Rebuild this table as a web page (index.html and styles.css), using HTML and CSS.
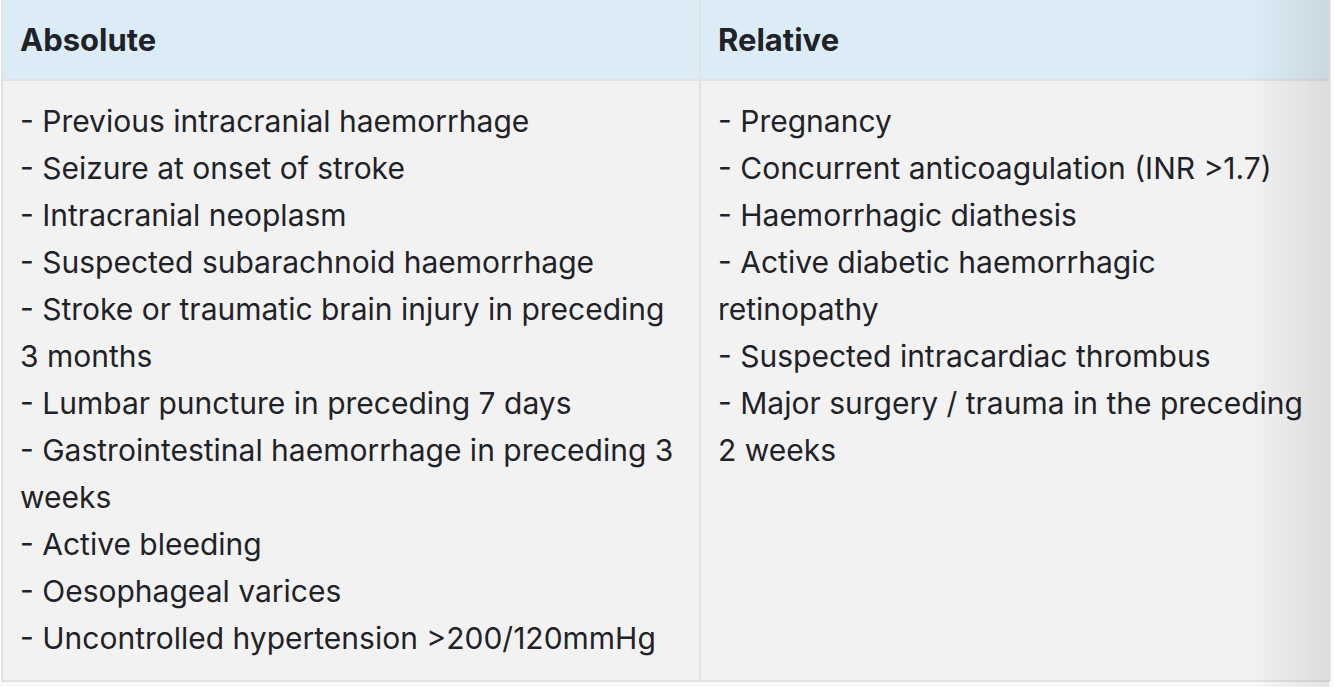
FILE: index.html
```html
<!DOCTYPE html>
<html>
<head>
<meta charset="utf-8">
<link rel="stylesheet" href="styles.css">
</head>
<body>
<div class="wrap">
  <table class="ci">
    <thead>
      <tr>
        <th class="col-a">Absolute</th>
        <th class="col-b">Relative</th>
      </tr>
    </thead>
    <tbody>
      <tr>
        <td class="col-a">- Previous intracranial haemorrhage<br>- Seizure at onset of stroke<br>- Intracranial neoplasm<br>- Suspected subarachnoid haemorrhage<br>- Stroke or traumatic brain injury in preceding 3 months<br>- Lumbar puncture in preceding 7 days<br>- Gastrointestinal haemorrhage in preceding 3 weeks<br>- Active bleeding<br>- Oesophageal varices<br>- Uncontrolled hypertension &gt;200/120mmHg</td>
        <td class="col-b">- Pregnancy<br>- Concurrent anticoagulation (INR &gt;1.7)<br>- Haemorrhagic diathesis<br>- Active diabetic haemorrhagic retinopathy<br>- Suspected intracardiac thrombus<br>- Major surgery / trauma in the preceding 2 weeks</td>
      </tr>
    </tbody>
  </table>
  <div class="shade"></div>
</div>
</body>
</html>
```
FILE: styles.css
```css
html, body {
  margin: 0;
  padding: 0;
  background: #fafafa;
}
body {
  font-family: Inter, "Noto Sans", sans-serif;
  color: #1f2328;
  width: 1334px;
  height: 687px;
  overflow: hidden;
}
.wrap {
  position: relative;
  width: 1331px;
  padding-left: 1px;
  background: #ffffff;
}
.ci {
  border-collapse: collapse;
  width: 1330px;
  table-layout: fixed;
}
.ci th, .ci td {
  border: 2px solid #dfe2e6;
  vertical-align: top;
  text-align: left;
}
.ci th {
  background: #dcecf6;
  font-weight: 700;
  font-size: 31px;
  height: 80px;
  padding: 0 17px;
  box-sizing: border-box;
  vertical-align: middle;
  border-top: none;
}
.ci td {
  background: #f2f2f2;
  font-size: 30px;
  line-height: 47px;
  padding: 17px 17px 18px 17px;
}
.col-a { width: 698px; }
.shade {
  position: absolute;
  top: 0;
  right: 3px;
  width: 80px;
  height: 687px;
  background: linear-gradient(to right, rgba(0,0,0,0), rgba(0,0,0,0.09));
  pointer-events: none;
}
```
